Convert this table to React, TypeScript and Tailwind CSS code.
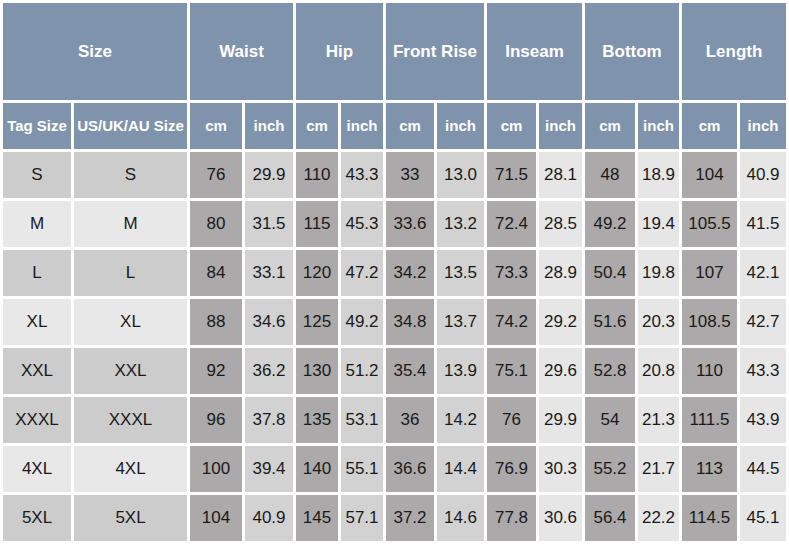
import { Fragment } from "react";

const groups = ["Waist", "Hip", "Front Rise", "Inseam", "Bottom", "Length"];

type Row = { size: string; light: boolean; values: string[] };

const rows: Row[] = [
  { size: "S", light: false, values: ["76", "29.9", "110", "43.3", "33", "13.0", "71.5", "28.1", "48", "18.9", "104", "40.9"] },
  { size: "M", light: true, values: ["80", "31.5", "115", "45.3", "33.6", "13.2", "72.4", "28.5", "49.2", "19.4", "105.5", "41.5"] },
  { size: "L", light: false, values: ["84", "33.1", "120", "47.2", "34.2", "13.5", "73.3", "28.9", "50.4", "19.8", "107", "42.1"] },
  { size: "XL", light: true, values: ["88", "34.6", "125", "49.2", "34.8", "13.7", "74.2", "29.2", "51.6", "20.3", "108.5", "42.7"] },
  { size: "XXL", light: false, values: ["92", "36.2", "130", "51.2", "35.4", "13.9", "75.1", "29.6", "52.8", "20.8", "110", "43.3"] },
  { size: "XXXL", light: false, values: ["96", "37.8", "135", "53.1", "36", "14.2", "76", "29.9", "54", "21.3", "111.5", "43.9"] },
  { size: "4XL", light: true, values: ["100", "39.4", "140", "55.1", "36.6", "14.4", "76.9", "30.3", "55.2", "21.7", "113", "44.5"] },
  { size: "5XL", light: false, values: ["104", "40.9", "145", "57.1", "37.2", "14.6", "77.8", "30.6", "56.4", "22.2", "114.5", "45.1"] },
];

// cm columns are the dark ones, inch columns get lighter after Front Rise
const valueBg = (i: number) => {
  if (i % 2 === 0) return "bg-[#aba9a9]";
  return i < 6 ? "bg-[#d2d2d2]" : "bg-[#e6e6e6]";
};

const head = "flex items-center justify-center bg-[#7f93ac] font-bold text-white";
const cell = "flex items-center justify-center text-[17px] text-[#1a1a1a]";

export default function App() {
  return (
    <div className="h-[546px] w-[789px] bg-white font-['Liberation_Sans',Arial,sans-serif]">
      <div className="grid grid-cols-[68px_113px_52px_48px_42px_42px_48px_47px_49px_43px_50px_41px_55px_46px] grid-rows-[97px_46px_repeat(8,46px)] gap-[3px] p-[3px]">
        <div className={`${head} col-span-2 text-[17px]`}>Size</div>
        {groups.map((g) => (
          <div key={g} className={`${head} col-span-2 text-[17px]`}>
            {g}
          </div>
        ))}

        <div className={`${head} whitespace-nowrap text-[15px]`}>Tag Size</div>
        <div className={`${head} whitespace-nowrap text-[15px]`}>US/UK/AU Size</div>
        {groups.map((g) => (
          <Fragment key={g}>
            <div className={`${head} text-[15px]`}>cm</div>
            <div className={`${head} text-[15px]`}>inch</div>
          </Fragment>
        ))}

        {rows.map((r) => {
          const sizeBg = r.light ? "bg-[#e8e8e8]" : "bg-[#cccccc]";
          return (
            <Fragment key={r.size}>
              <div className={`${cell} ${sizeBg}`}>{r.size}</div>
              <div className={`${cell} ${sizeBg}`}>{r.size}</div>
              {r.values.map((v, i) => (
                <div key={i} className={`${cell} ${valueBg(i)}`}>
                  {v}
                </div>
              ))}
            </Fragment>
          );
        })}
      </div>
    </div>
  );
}
